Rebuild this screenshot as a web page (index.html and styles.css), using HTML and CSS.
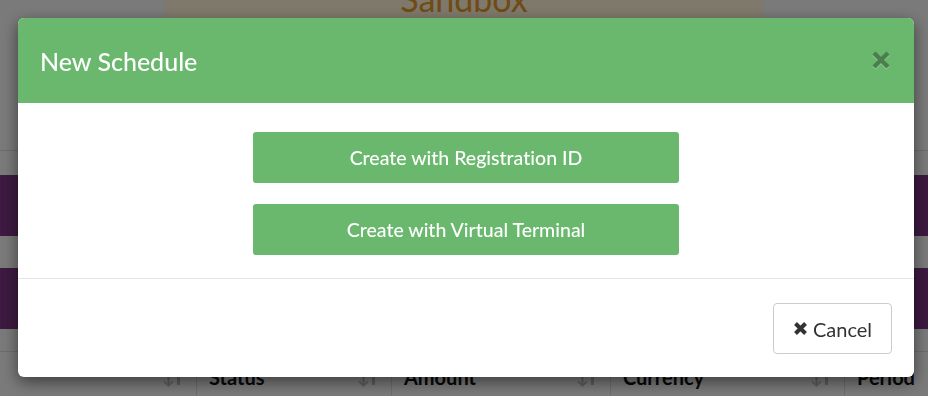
FILE: index.html
```html
<!DOCTYPE html>
<html lang="en">
<head>
	<title>New Schedule</title>
	<link rel="stylesheet" href="styles.css">
</head>
<body>
	<div id="page">
		<div class="banner"><span>Sandbox</span></div>
		<div class="strip"></div>
		<div class="bar"></div>
		<div class="spacer"></div>
		<div class="bar"></div>
		<div class="spacer short"></div>
		<div class="thead">
			<div class="th"><i class="sort">&#8595;<b></b></i></div>
			<div class="th">Status <i class="sort">&#8595;<b></b></i></div>
			<div class="th">Amount <i class="sort">&#8595;<b></b></i></div>
			<div class="th">Currency <i class="sort">&#8595;<b></b></i></div>
			<div class="th">Period</div>
		</div>
	</div>

	<div class="backdrop"></div>

	<div class="modal">
		<div class="modal-header">
			<h4>New Schedule</h4>
			<button class="close" title="Close">
				<svg width="18" height="19" viewBox="0 0 18 19">
					<path class="shadow" d="M2 3 L16 17 M16 3 L2 17"/>
					<path d="M2 2 L16 16 M16 2 L2 16"/>
				</svg>
			</button>
		</div>
		<div class="modal-body">
			<button class="btn-green">Create with Registration ID</button>
			<button class="btn-green">Create with Virtual Terminal</button>
		</div>
		<div class="modal-footer">
			<button class="btn-cancel">
				<svg width="15" height="15" viewBox="0 0 15 15"><path d="M2.5 2.5 L12.5 12.5 M12.5 2.5 L2.5 12.5"/></svg>
				Cancel
			</button>
		</div>
	</div>
</body>
</html>
```

FILE: styles.css
```css
body {
	margin: 0;
	background-color: #f4f4f4;
	font-family: "Lato", "Open Sans", sans-serif;
	font-variant-ligatures: none;
	color: #333;
	overflow: hidden;
}

#page {
	height: 396px;
}

.banner {
	width: 598px;
	height: 60px;
	margin-left: 165px;
	background-color: #fcf3d6;
	text-align: center;
	overflow: hidden;
}

.banner span {
	display: block;
	margin-top: -22px;
	font-size: 34px;
	color: #e0962a;
}

.strip {
	height: 90px;
	border-bottom: 1px solid #d8d8d8;
}

.bar {
	height: 61px;
	margin-top: 24px;
	background-color: #7a3482;
}

.spacer { height: 8px; }
.spacer.short {
	height: 22px;
	border-bottom: 1px solid #d8d8d8;
}

.bar + .spacer + .bar { margin-top: 24px; }

.thead {
	display: grid;
	grid-template-columns: 197px 195px 219px 234px 1fr;
	height: 46px;
}

.th {
	display: flex;
	align-items: center;
	justify-content: space-between;
	padding: 4px 16px 0 12px;
	border-right: 1px solid #d8d8d8;
	font-weight: bold;
	font-size: 20px;
	color: #111;
}

.th:first-child { justify-content: flex-end; }

.sort {
	display: flex;
	align-items: center;
	gap: 2px;
	font-style: normal;
	font-weight: bold;
	font-size: 17px;
	color: #bbb;
}

.sort b {
	width: 3px;
	height: 15px;
	background-color: #bbb;
}

.backdrop {
	position: fixed;
	inset: 0;
	background-color: rgba(0, 0, 0, 0.5);
}

.modal {
	position: fixed;
	top: 18px;
	left: 18px;
	width: 896px;
	background-color: #fff;
	border-radius: 6px;
	box-shadow: 0 5px 15px rgba(0, 0, 0, 0.5);
	overflow: hidden;
}

.modal-header {
	display: flex;
	align-items: center;
	justify-content: space-between;
	height: 85px;
	padding: 0 24px 0 22px;
	background-color: #6ab86e;
}

.modal-header h4 {
	margin: 0;
	font-size: 25px;
	font-weight: 500;
	color: #fff;
}

.close {
	padding: 0;
	border: 0;
	background: none;
	opacity: 0.3;
	margin-top: 2px;
}

.close path {
	fill: none;
	stroke: #000;
	stroke-width: 4.5;
}

.close path.shadow { stroke: #fff; }

.modal-body {
	display: flex;
	flex-direction: column;
	align-items: center;
	gap: 21px;
	padding: 29px 0 23px;
	border-bottom: 1px solid #e5e5e5;
}

.btn-green {
	width: 426px;
	height: 51px;
	border: 0;
	border-radius: 3px;
	background-color: #6ab86e;
	color: #fff;
	font-family: inherit;
	font-variant-ligatures: none;
	font-weight: 500;
	font-size: 19.5px;
}

.modal-footer {
	display: flex;
	justify-content: flex-end;
	padding: 24px 22px 23px;
}

.btn-cancel {
	display: flex;
	align-items: center;
	justify-content: center;
	gap: 5px;
	width: 119px;
	height: 51px;
	border: 1px solid #ccc;
	border-radius: 4px;
	background-color: #fff;
	color: #333;
	font-family: inherit;
	font-size: 20px;
}

.btn-cancel path {
	fill: none;
	stroke: #333;
	stroke-width: 4;
}
```
